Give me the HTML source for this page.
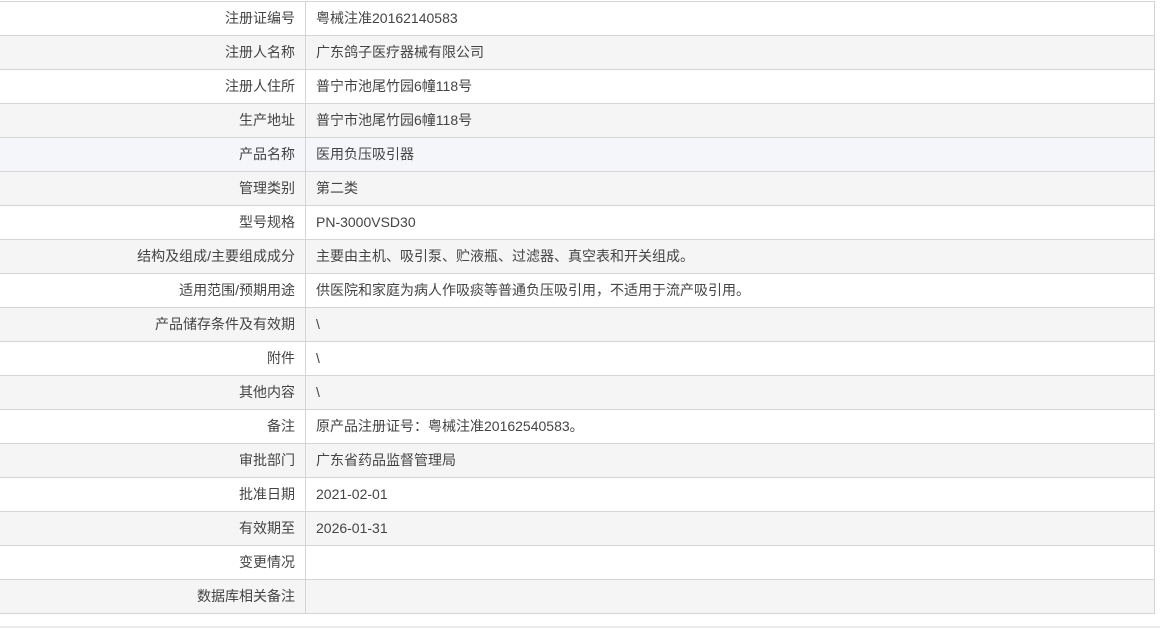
<!DOCTYPE html>
<html><head><meta charset="utf-8"><style>
body{margin:0;background:#fff;font-family:"Liberation Sans","Noto Sans CJK SC",sans-serif;font-size:14px;color:#444;width:1160px;height:629px;overflow:hidden;position:relative}
table{position:absolute;left:-1px;top:1px;border-collapse:collapse;width:1156px}
td{border:1px solid #d4d4d4;height:34px;padding:0 10px;line-height:33px;box-sizing:border-box}
td.l{width:306px;text-align:right}
tr:nth-child(even) td{background:#f5f5f5}
tr.h td{background:#f4f6fa}
.bot{position:absolute;left:0;top:626px;width:1160px;height:2px;background:#ececec}
</style></head><body>
<table>
<tr><td class="l">注册证编号</td><td>粤械注准20162140583</td></tr>
<tr><td class="l">注册人名称</td><td>广东鸽子医疗器械有限公司</td></tr>
<tr><td class="l">注册人住所</td><td>普宁市池尾竹园6幢118号</td></tr>
<tr><td class="l">生产地址</td><td>普宁市池尾竹园6幢118号</td></tr>
<tr class="h"><td class="l">产品名称</td><td>医用负压吸引器</td></tr>
<tr><td class="l">管理类别</td><td>第二类</td></tr>
<tr><td class="l">型号规格</td><td>PN-3000VSD30</td></tr>
<tr><td class="l">结构及组成/主要组成成分</td><td>主要由主机、吸引泵、贮液瓶、过滤器、真空表和开关组成。</td></tr>
<tr><td class="l">适用范围/预期用途</td><td>供医院和家庭为病人作吸痰等普通负压吸引用，不适用于流产吸引用。</td></tr>
<tr><td class="l">产品储存条件及有效期</td><td>\</td></tr>
<tr><td class="l">附件</td><td>\</td></tr>
<tr><td class="l">其他内容</td><td>\</td></tr>
<tr><td class="l">备注</td><td>原产品注册证号：粤械注准20162540583。</td></tr>
<tr><td class="l">审批部门</td><td>广东省药品监督管理局</td></tr>
<tr><td class="l">批准日期</td><td>2021-02-01</td></tr>
<tr><td class="l">有效期至</td><td>2026-01-31</td></tr>
<tr><td class="l">变更情况</td><td></td></tr>
<tr><td class="l">数据库相关备注</td><td></td></tr>
</table>
<div class="bot"></div>
</body></html>
